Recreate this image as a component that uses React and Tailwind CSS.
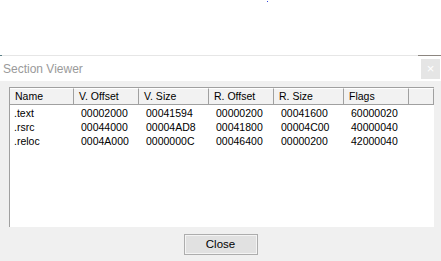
import React from 'react'

const cols = [
  { label: 'Name', w: 'w-[64px]' },
  { label: 'V. Offset', w: 'w-[65px]' },
  { label: 'V. Size', w: 'w-[70px]' },
  { label: 'R. Offset', w: 'w-[65px]' },
  { label: 'R. Size', w: 'w-[70px]' },
  { label: 'Flags', w: 'w-[65px]' },
]

const rows = [
  ['.text', '00002000', '00041594', '00000200', '00041600', '60000020'],
  ['.rsrc', '00044000', '00004AD8', '00041800', '00004C00', '40000040'],
  ['.reloc', '0004A000', '0000000C', '00046400', '00000200', '42000040'],
]

export default function App() {
  return (
    <div className="w-[441px] h-[261px] bg-white flex flex-col overflow-hidden font-['Liberation_Sans',Arial,sans-serif] text-[#000]">
      {/* area above the dialog */}
      <div className="h-[55px] relative">
        <div className="absolute left-[267px] top-[1px] w-[1px] h-[1px] bg-[#3344dd]" />
      </div>

      {/* top edge of window */}
      <div className="h-[1px] flex">
        <div className="w-[2px] bg-[#5a7f86]" />
        <div className="flex-1 bg-[#e6e6e6]" />
        <div className="w-[23px] bg-[#8c8680]" />
      </div>

      {/* title bar */}
      <div className="h-[25px] flex items-center justify-between">
        <span className="pl-[3px] text-[12px] text-[#9a9a9a]">Section Viewer</span>
        <div className="w-[19px] h-[20px] mr-[1px] bg-[#e5e5e5] flex items-center justify-center text-white text-[13px] leading-none">
          ×
        </div>
      </div>

      {/* body */}
      <div className="flex-1 bg-[#f0f0f0] flex flex-col pt-[6px] pl-[9px] pr-[7px] text-[10.5px]">
        <div className="h-[140px] bg-white border-l border-t border-[#a0a0a0] flex flex-col">
          <div className="h-[17px] flex bg-[#f2f2f2]">
            {cols.map(c => (
              <div
                key={c.label}
                className={`${c.w} shrink-0 border-r border-b border-[#a0a0a0] border-t border-t-white pl-[5px] flex items-center`}
              >
                {c.label}
              </div>
            ))}
            <div className="flex-1 border-b border-r border-[#a0a0a0] border-t border-t-white" />
          </div>
          <div className="pt-[2px]">
            {rows.map(r => (
              <div key={r[0]} className="h-[14px] flex items-center">
                {r.map((v, i) => (
                  <div key={i} className={`${cols[i].w} shrink-0 ${i === 0 ? 'pl-[4px]' : 'pl-[7px]'}`}>
                    {v}
                  </div>
                ))}
              </div>
            ))}
          </div>
        </div>

        <div className="flex justify-center pt-[7px] pr-[2px]">
          <button className="w-[74px] h-[21px] border border-[#adadad] bg-[#e1e1e1] shadow-[inset_0_0_0_1px_#f4f4f4] text-[11.5px] flex items-center justify-center">
            Close
          </button>
        </div>
      </div>
    </div>
  )
}
